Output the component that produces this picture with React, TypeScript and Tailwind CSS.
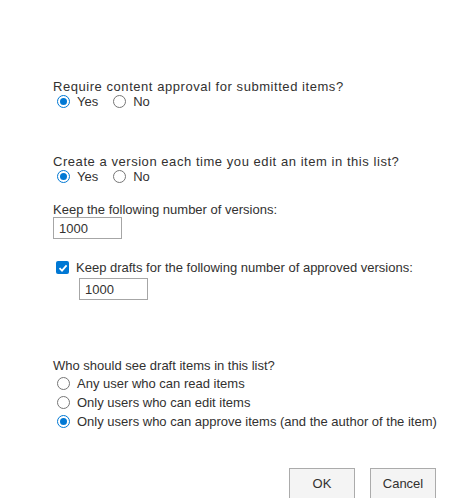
import React from "react";

function Radio({ checked, label, h = "h-[14px]" }: { checked?: boolean; label: string; h?: string }) {
  return (
    <div className={"flex items-center " + h}>
      <span
        className={
          checked
            ? "w-[13px] h-[13px] rounded-full border border-[#0078d4] flex items-center justify-center ml-[4px]"
            : "w-[13px] h-[13px] rounded-full border border-[#767676] ml-[4px]"
        }
      >
        {checked && <span className="w-[7px] h-[7px] rounded-full bg-[#0078d4]" />}
      </span>
      <span className="ml-[7px]">{label}</span>
    </div>
  );
}

function NumBox({ value }: { value: string }) {
  return (
    <div className="w-[69px] h-[22px] border border-[#a6a6a6] bg-white flex items-center pl-[5px]">
      {value}
    </div>
  );
}

export default function App() {
  return (
    <div
      className="w-[451px] h-[498px] bg-white text-[#323130] text-[13px] leading-[15px] overflow-hidden"
      style={{ fontFamily: '"Liberation Sans", Arial, sans-serif' }}
    >
      <div className="pl-[53px] pt-[79px]">
        {/* content approval */}
        <div className="tracking-[0.55px]">Require content approval for submitted items?</div>
        <div className="flex gap-[11px]">
          <Radio checked label="Yes" />
          <Radio label="No" />
        </div>

        {/* versioning */}
        <div className="mt-[46px] tracking-[0.55px]">Create a version each time you edit an item in this list?</div>
        <div className="flex gap-[11px]">
          <Radio checked label="Yes" />
          <Radio label="No" />
        </div>

        <div className="mt-[19px]">Keep the following number of versions:</div>
        <NumBox value="1000" />

        <div className="mt-[21px] flex items-center ml-[3px]">
          <span className="w-[13px] h-[13px] rounded-[2px] bg-[#0078d4] flex items-center justify-center">
            <svg width="10" height="10" viewBox="0 0 10 10">
              <path d="M1.5 5.2 L4 7.6 L8.6 2.4" fill="none" stroke="white" strokeWidth="1.8" />
            </svg>
          </span>
          <span className="ml-[7px]">Keep drafts for the following number of approved versions:</span>
        </div>
        <div className="ml-[26px] mt-[3px]">
          <NumBox value="1000" />
        </div>

        {/* draft visibility */}
        <div className="mt-[58px]">Who should see draft items in this list?</div>
        <div className="flex flex-col mt-[1px]">
          <Radio h="h-[19px]" label="Any user who can read items" />
          <Radio h="h-[19px]" label="Only users who can edit items" />
          <Radio h="h-[19px]" checked label="Only users who can approve items (and the author of the item)" />
        </div>
      </div>

      <div className="flex justify-end gap-[15px] pr-[15px] mt-[37px]">
        <button className="w-[66px] h-[32px] pb-[2px] bg-[#f4f4f4] border border-[#ababab] text-[#323130]">OK</button>
        <button className="w-[66px] h-[32px] pb-[2px] bg-[#f4f4f4] border border-[#ababab] text-[#323130]">Cancel</button>
      </div>
    </div>
  );
}
